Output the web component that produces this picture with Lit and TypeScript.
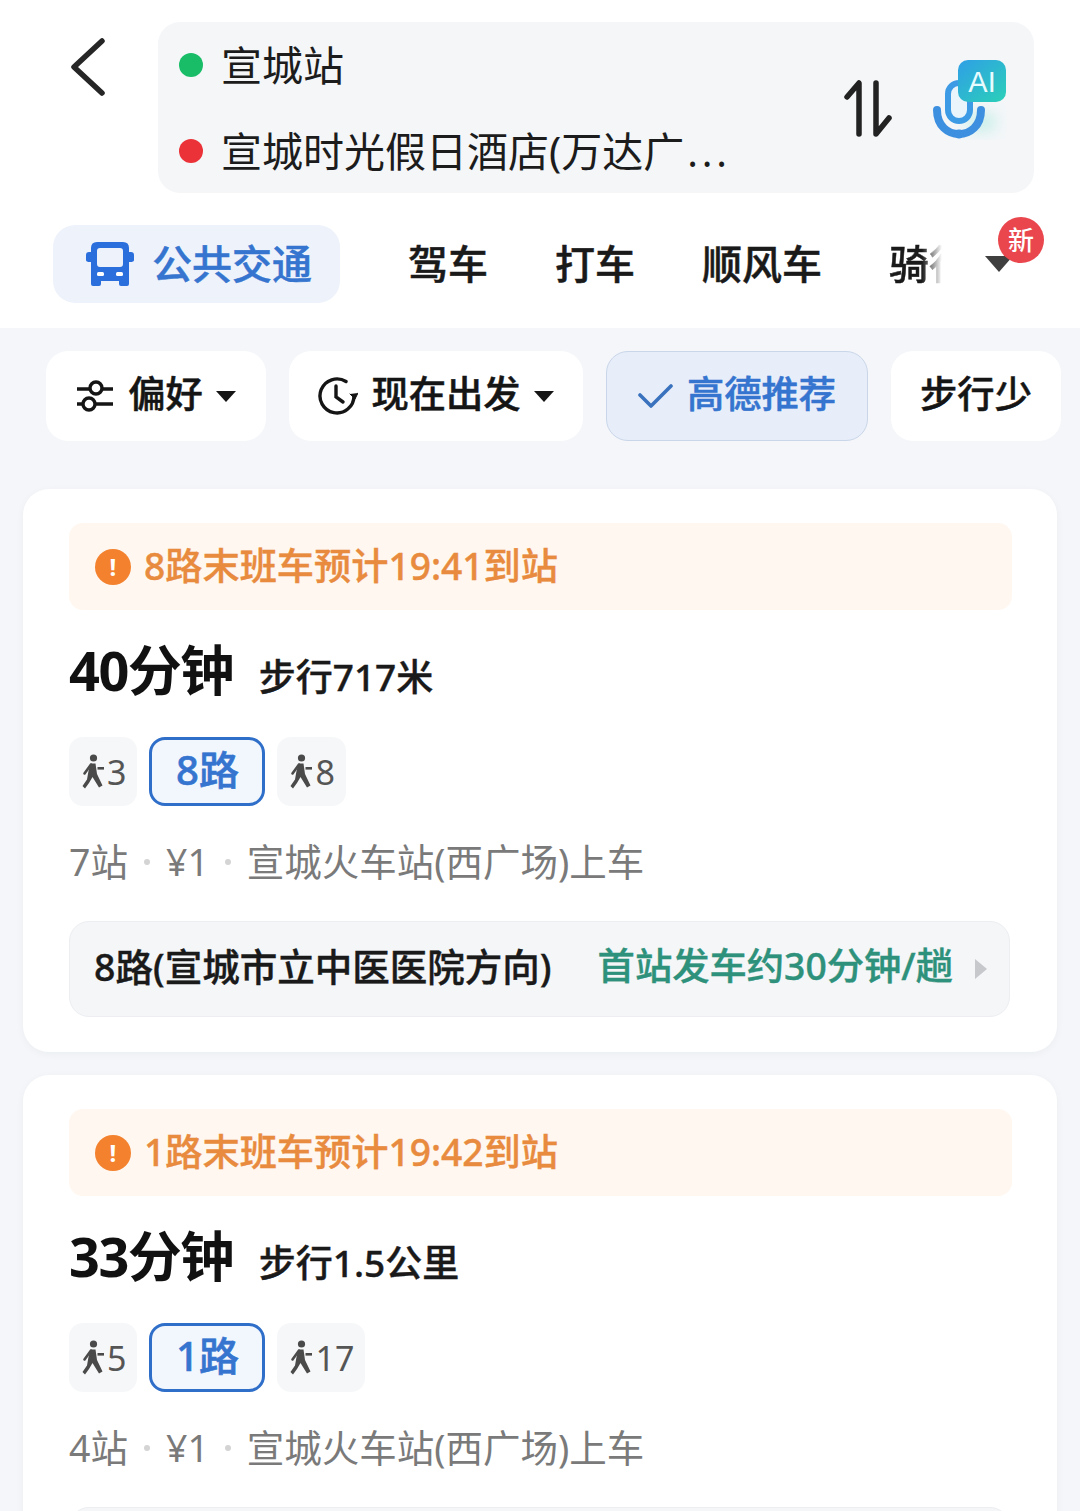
import { LitElement, html, css, svg } from "lit";
import { customElement } from "lit/decorators.js";

const walker = svg`<svg class="walk" viewBox="0 0 24 36" width="24" height="36">
  <circle cx="11.5" cy="4" r="3.6" fill="#4a4a4a"/>
  <path d="M8.5 9.5 H13.5 L15 20 L20.5 31.5 L17 33.5 L10.5 23 L7 29 L3 34.5 L0.5 32 L5 25.5 L6.5 17 Z" fill="#4a4a4a"/>
  <path d="M9 10.5 L2.5 19.5" stroke="#4a4a4a" stroke-width="2.6" stroke-linecap="round" fill="none"/>
  <rect x="15.5" y="13" width="6.5" height="2.6" fill="#4a4a4a"/>
</svg>`;

const routes = [
  { warn: "8路末班车预计19:41到站", time: "40分钟", walk: "步行717米", a: "3", line: "8路", b: "8", stops: "7站",
    via: "8路(宣城市立中医医院方向)", freq: "首站发车约30分钟/趟" },
  { warn: "1路末班车预计19:42到站", time: "33分钟", walk: "步行1.5公里", a: "5", line: "1路", b: "17", stops: "4站",
    via: "", freq: "" },
];

@customElement("app-root")
export class AppRoot extends LitElement {
  static styles = css`
    :host {
      display: block;
      width: 1080px;
      height: 1511px;
      overflow: hidden;
      background: #f4f6f9;
      font-family: "Noto Sans", "Noto Sans CJK SC", sans-serif;
      color: #1a1a1a;
    }
    header {
      background: #fff;
      padding: 22px 0 25px;
    }
    .top { display: flex; }
    .back {
      width: 158px;
      padding: 16px 0 0 70px;
      box-sizing: border-box;
    }
    .search {
      width: 876px;
      height: 171px;
      box-sizing: border-box;
      background: #f4f6f8;
      border-radius: 22px;
      padding-left: 21px;
      display: flex;
      align-items: flex-start;
    }
    .places { flex: 1; display: flex; flex-direction: column; gap: 2px; padding-top: 1px; }
    .place {
      height: 84px;
      display: flex;
      align-items: center;
      gap: 18px;
      font-size: 41px;
      line-height: 84px;
      color: #1c1c1c;
    }
    .dots { letter-spacing: 3.8px; margin-left: 3px; font-size: 40px; }
    .dot { width: 24px; height: 24px; border-radius: 50%; flex: none; }
    .dot.g { background: #19bd68; }
    .dot.r { background: #ea3238; }
    .swap { margin: 58px 41px 0 0; display: block; flex: none; }
    .mic { margin: 38px 27px 0 0; display: block; flex: none; }
    .tabs {
      margin-top: 32px;
      height: 78px;
      padding-left: 53px;
      display: flex;
      align-items: center;
      gap: 67px;
      position: relative;
    }
    .tab {
      font-size: 40px;
      font-weight: 500;
      -webkit-text-stroke: 0.5px currentColor;
      line-height: 78px;
      white-space: nowrap;
      color: #1a1a1a;
      flex: none;
    }
    .tab.on {
      width: 287px;
      height: 78px;
      box-sizing: border-box;
      padding-left: 33px;
      margin-right: 1px;
      display: flex;
      align-items: center;
      gap: 18px;
      background: #eef3fb;
      border-radius: 22px;
      color: #3574cf;
    }
    .tab.clip {
      width: 53px;
      overflow: hidden;
      -webkit-mask-image: linear-gradient(90deg, #000 62%, transparent 100%);
      mask-image: linear-gradient(90deg, #000 62%, transparent 100%);
    }
    .more {
      width: 0; height: 0;
      flex: none;
      margin-left: -24px;
      border-left: 14px solid transparent;
      border-right: 14px solid transparent;
      border-top: 16px solid #3f3f3f;
    }
    .badge {
      position: absolute;
      left: 998px;
      top: -8px;
      width: 46px;
      height: 46px;
      border-radius: 50%;
      background: #e9474d;
      color: #fff;
      font-size: 26px;
      font-weight: 500;
      line-height: 46px;
      text-align: center;
    }
    .filters {
      display: flex;
      padding: 23px 0 0 46px;
      gap: 23px;
      height: 90px;
    }
    .pill {
      height: 90px;
      box-sizing: border-box;
      padding-bottom: 8px;
      background: #fff;
      border-radius: 22px;
      display: flex;
      align-items: center;
      justify-content: center;
      font-size: 37.3px;
      font-weight: 500;
      -webkit-text-stroke: 0.5px currentColor;
      white-space: nowrap;
      color: #151515;
      flex: none;
    }
    .pill svg, .pill .caret { position: relative; top: 4px; }
    .pill.on {
      background: #e7eef9;
      border: 1.5px solid #c9d6e9;
      color: #3574cf;
    }
    .caret {
      width: 0; height: 0;
      border-left: 10px solid transparent;
      border-right: 10px solid transparent;
      border-top: 11px solid #151515;
      margin-left: 13px;
    }
    .cards { padding: 48px 23px 0; display: flex; flex-direction: column; gap: 23px; }
    .card {
      background: #fff;
      border-radius: 26px;
      padding: 34px 46px 35px;
      box-shadow: 0 2px 8px rgba(30, 40, 60, 0.04);
    }
    .warn {
      width: 943px;
      height: 87px;
      box-sizing: border-box;
      background: #fff7f0;
      border-radius: 14px;
      padding-left: 26px;
      display: flex;
      align-items: center;
      gap: 13px;
      font-size: 37.2px;
      font-weight: 500;
      -webkit-text-stroke: 0.4px currentColor;
      color: #e88b3e;
    }
    .warn > span:last-child { position: relative; top: -3px; }
    .ex {
      width: 36px; height: 36px;
      border-radius: 50%;
      background: #f3812d;
      color: #fff;
      font-size: 24px;
      font-weight: 700;
      line-height: 36px;
      text-align: center;
      flex: none;
      -webkit-text-stroke: 0;
    }
    .head { display: flex; align-items: baseline; gap: 26px; margin-top: 24px; height: 72px; line-height: 72px; }
    .time { font-size: 54px; font-weight: 700; color: #111; letter-spacing: -1.5px; }
    .dist { font-size: 37px; font-weight: 500; color: #1a1a1a; -webkit-text-stroke: 0.4px currentColor; }
    .chips { display: flex; gap: 12px; margin-top: 31px; }
    .chip {
      height: 69px;
      box-sizing: border-box;
      padding: 0 11px 0 13px;
      border-radius: 14px;
      background: #f6f7f8;
      display: flex;
      align-items: center;
      gap: 1px;
      font-size: 34px;
      color: #555;
    }
    .chip.line {
      width: 116px;
      justify-content: center;
      padding: 0 0 7px;
      background: #f2f7fe;
      border: 3.5px solid #2f6fc9;
      border-radius: 16px;
      font-size: 40px;
      font-weight: 500;
      -webkit-text-stroke: 0.6px currentColor;
      color: #3574cf;
    }
    .walk { display: block; }
    .meta {
      display: flex;
      align-items: center;
      height: 46px;
      line-height: 46px;
      margin-top: 33px;
      font-size: 37.5px;
      color: #7a7a7a;
    }
    .sep { width: 6px; height: 6px; border-radius: 50%; background: #d4d4d4; margin: 0 16px; flex: none; }
    .via {
      width: 941px;
      height: 96px;
      box-sizing: border-box;
      margin-top: 36px;
      padding: 0 22px 10px 24px;
      background: #f4f6f8;
      border: 1.5px solid #eceef1;
      border-radius: 20px;
      display: flex;
      align-items: center;
      font-size: 37.5px;
      font-weight: 500;
      -webkit-text-stroke: 0.4px currentColor;
      white-space: nowrap;
    }
    .via .f { margin-left: auto; color: #2e917b; font-size: 37.3px; }
    .arrow {
      width: 0; height: 0;
      margin: 10px 0 0 22px;
      border-top: 10px solid transparent;
      border-bottom: 10px solid transparent;
      border-left: 12px solid #c6c8cc;
    }
  `;

  private card(r: (typeof routes)[number]) {
    return html`<section class="card">
      <div class="warn"><span class="ex">!</span><span>${r.warn}</span></div>
      <div class="head"><span class="time">${r.time}</span><span class="dist">${r.walk}</span></div>
      <div class="chips">
        <div class="chip">${walker}<span>${r.a}</span></div>
        <div class="chip line">${r.line}</div>
        <div class="chip">${walker}<span>${r.b}</span></div>
      </div>
      <div class="meta">
        <span>${r.stops}</span><i class="sep"></i><span>¥1</span><i class="sep"></i><span>宣城火车站(西广场)上车</span>
      </div>
      ${r.via
        ? html`<div class="via"><span>${r.via}</span><span class="f">${r.freq}</span><i class="arrow"></i></div>`
        : html`<div class="via"></div>`}
    </section>`;
  }

  render() {
    return html`
      <header>
        <div class="top">
          <div class="back">
            <svg width="36" height="60" viewBox="0 0 36 60" fill="none" stroke="#262626" stroke-width="5.5" stroke-linecap="round" stroke-linejoin="round">
              <path d="M32 3 L4 29 L32 55"/>
            </svg>
          </div>
          <div class="search">
            <div class="places">
              <div class="place"><i class="dot g"></i><span>宣城站</span></div>
              <div class="place"><i class="dot r"></i><span>宣城时光假日酒店(万达广<span class="dots">...</span></span></div>
            </div>
            <svg class="swap" width="48" height="58" viewBox="0 0 48 58" fill="none" stroke="#222" stroke-width="5.5" stroke-linecap="round" stroke-linejoin="round">
              <path d="M3 17 L15 3 V54"/>
              <path d="M32 3 V54 L45 38"/>
            </svg>
            <svg class="mic" width="74" height="80" viewBox="0 0 74 80">
              <defs>
                <linearGradient id="ai" x1="0" y1="0" x2="1" y2="1"><stop offset="0" stop-color="#2f9fe6"/><stop offset="1" stop-color="#2bd0b8"/></linearGradient>
                <filter id="soft" x="-60%" y="-60%" width="220%" height="220%"><feGaussianBlur stdDeviation="7"/></filter>
              </defs>
              <ellipse cx="48" cy="62" rx="16" ry="11" fill="#bfeee6" opacity=".75" filter="url(#soft)"/>
              <path d="M4 50 C4 82 48 82 48 50" fill="none" stroke="#3d8fe0" stroke-width="8" stroke-linecap="round"/>
              <rect x="15" y="23" width="22" height="38" rx="11" fill="#eaf4fb" stroke="#3d9be6" stroke-width="6"/>
              <circle cx="26" cy="74" r="4.5" fill="#3d8fe0"/>
              <rect x="25" y="0" width="48" height="42" rx="10" fill="url(#ai)"/>
              <text x="49" y="32" text-anchor="middle" font-family="Liberation Sans, sans-serif" font-size="29" fill="#e8fbff">AI</text>
            </svg>
          </div>
        </div>
        <nav class="tabs">
          <div class="tab on">
            <svg width="48" height="44" viewBox="0 0 48 44">
              <path fill="#2a6fdc" fill-rule="evenodd" d="M11 0 H37 Q43 0 43 6 V10 H45 Q48 10 48 13 V18 Q48 20 44 20 H43 V42 Q43 44 41 44 H35 Q33 44 33 42 V39 H15 V42 Q15 44 13 44 H7 Q5 44 5 42 V20 H4 Q0 20 0 18 V13 Q0 10 3 10 H5 V6 Q5 0 11 0 Z M14 6 Q11 6 11 9 V22 Q11 25 14 25 H34 Q37 25 37 22 V9 Q37 6 34 6 Z"/>
              <rect x="11" y="30" width="7" height="4" rx="1.5" fill="#fff"/>
              <rect x="30" y="30" width="7" height="4" rx="1.5" fill="#fff"/>
            </svg>
            <span>公共交通</span>
          </div>
          <div class="tab">驾车</div>
          <div class="tab">打车</div>
          <div class="tab">顺风车</div>
          <div class="tab clip">骑行</div>
          <i class="more"></i>
          <div class="badge">新</div>
        </nav>
      </header>
      <div class="filters">
        <div class="pill" style="width:220px">
          <svg width="38" height="36" viewBox="0 0 38 36" fill="none" stroke="#151515" stroke-width="3.4" style="margin-right:14px">
            <path d="M1 11 H14 M26 11 H37 M1 26 H6 M20 26 H37"/>
            <circle cx="20" cy="10" r="6"/><circle cx="13" cy="26" r="6"/>
          </svg>
          <span>偏好</span><i class="caret"></i>
        </div>
        <div class="pill" style="width:294px">
          <svg width="40" height="38" viewBox="0 0 40 38" fill="none" stroke="#151515" stroke-width="3.4" stroke-linecap="round" style="margin-right:13px">
            <path d="M36 19 A17 17 0 1 1 28 4.5"/>
            <path d="M18 9 V20 L25 25"/>
            <path d="M32 17 L37 22 L40 16" fill="#151515" stroke-width="1"/>
          </svg>
          <span>现在出发</span><i class="caret"></i>
        </div>
        <div class="pill on" style="width:262px">
          <svg width="36" height="26" viewBox="0 0 36 26" fill="none" stroke="#3a72bd" stroke-width="3.6" stroke-linecap="round" stroke-linejoin="round" style="margin-right:13px">
            <path d="M2 12 L13 23 L33 3"/>
          </svg>
          <span>高德推荐</span>
        </div>
        <div class="pill" style="width:170px">步行少</div>
      </div>
      <main class="cards">${routes.map((r) => this.card(r))}</main>
    `;
  }
}
